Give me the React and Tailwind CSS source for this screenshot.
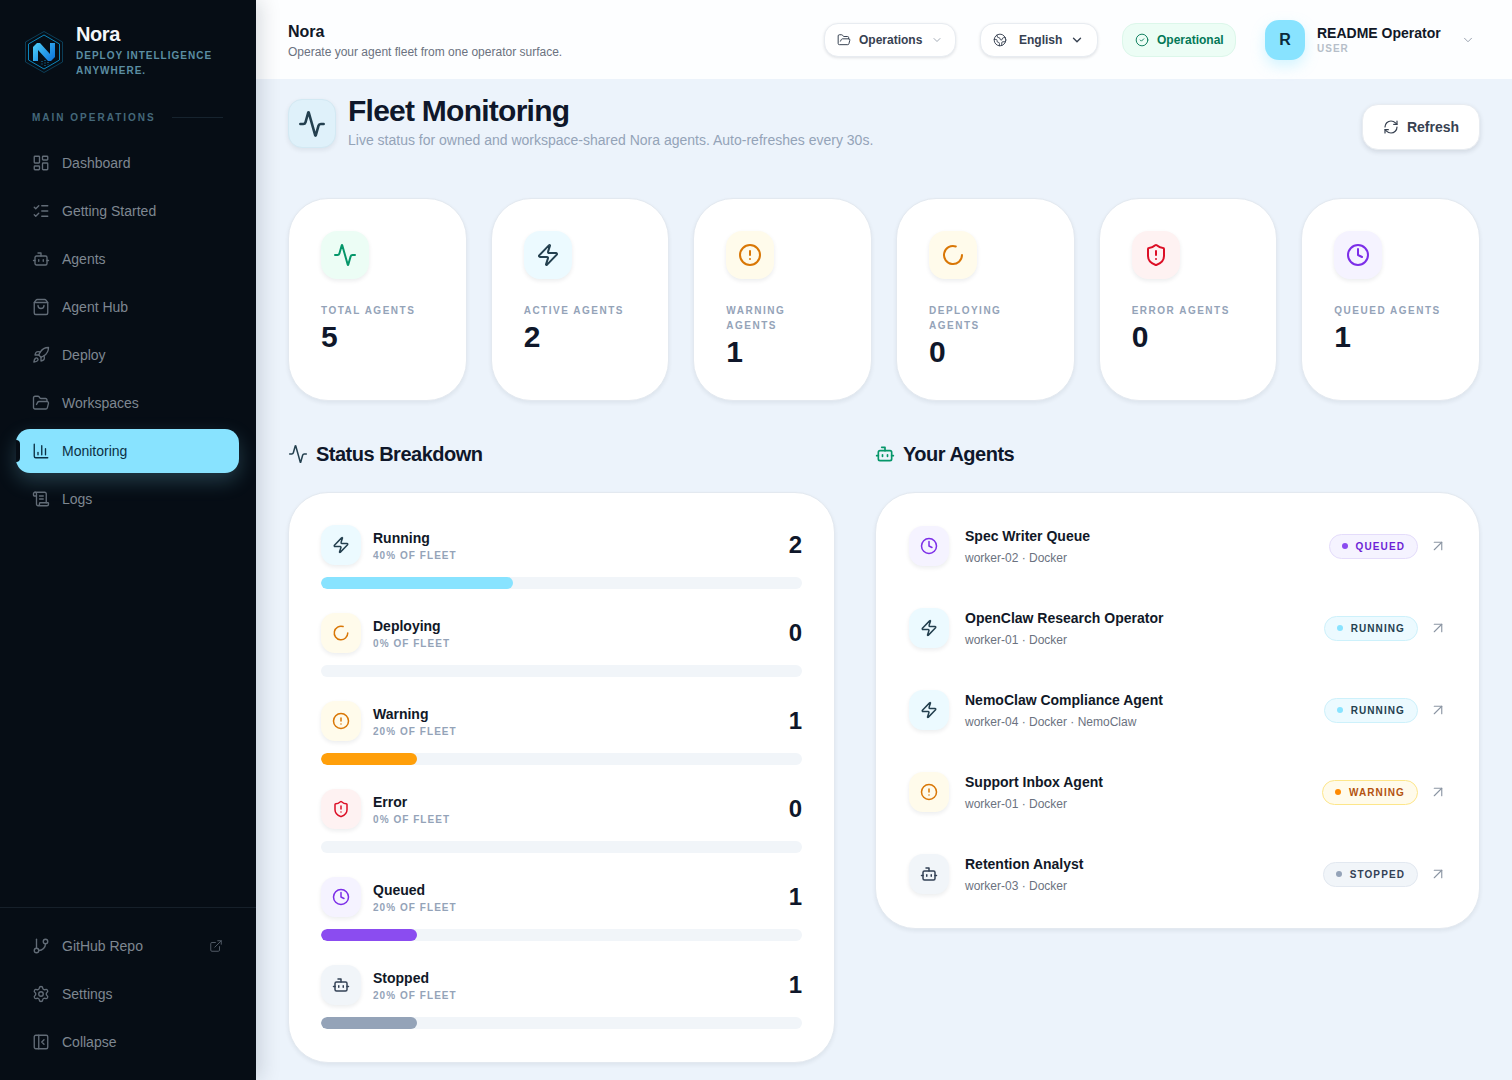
import React from 'react';
import {
  Activity, ArrowUpRight, Bot, ChartColumn, ChevronDown, CircleAlert, CircleCheck, Clock, Earth, ExternalLink,
  FolderOpen, GitBranch, LayoutDashboard, ListChecks, LoaderCircle, PanelLeftClose, RefreshCw, Rocket,
  ScrollText, Settings, ShieldAlert, ShoppingBag, Zap,
} from 'lucide-react';

const navItems = [
  { label: 'Dashboard', icon: LayoutDashboard },
  { label: 'Getting Started', icon: ListChecks },
  { label: 'Agents', icon: Bot },
  { label: 'Agent Hub', icon: ShoppingBag },
  { label: 'Deploy', icon: Rocket },
  { label: 'Workspaces', icon: FolderOpen },
  { label: 'Monitoring', icon: ChartColumn, active: true },
  { label: 'Logs', icon: ScrollText },
];

const tones = {
  green: { box: 'bg-[#ecfdf5]', icon: 'text-[#059669]' },
  cyan: { box: 'bg-[#ecfaff]', icon: 'text-[#24404f]' },
  amber: { box: 'bg-[#fffbeb]', icon: 'text-[#d97706]' },
  red: { box: 'bg-[#fef2f2]', icon: 'text-[#dc0f26]' },
  violet: { box: 'bg-[#f5f3ff]', icon: 'text-[#7c2ee8]' },
  slate: { box: 'bg-[#f1f5f9]', icon: 'text-[#334155]' },
};

const stats = [
  { label: 'Total Agents', value: 5, icon: Activity, tone: 'green' },
  { label: 'Active Agents', value: 2, icon: Zap, tone: 'cyan' },
  { label: 'Warning Agents', value: 1, icon: CircleAlert, tone: 'amber' },
  { label: 'Deploying Agents', value: 0, icon: LoaderCircle, tone: 'amber' },
  { label: 'Error Agents', value: 0, icon: ShieldAlert, tone: 'red' },
  { label: 'Queued Agents', value: 1, icon: Clock, tone: 'violet' },
];

const breakdown = [
  { label: 'Running', pct: 40, count: 2, icon: Zap, tone: 'cyan', bar: 'bg-[#88e3ff]' },
  { label: 'Deploying', pct: 0, count: 0, icon: LoaderCircle, tone: 'amber', bar: 'bg-[#f59e0b]' },
  { label: 'Warning', pct: 20, count: 1, icon: CircleAlert, tone: 'amber', bar: 'bg-[#ff9f0a]' },
  { label: 'Error', pct: 0, count: 0, icon: ShieldAlert, tone: 'red', bar: 'bg-[#dc2626]' },
  { label: 'Queued', pct: 20, count: 1, icon: Clock, tone: 'violet', bar: 'bg-[#8b4cf0]' },
  { label: 'Stopped', pct: 20, count: 1, icon: Bot, tone: 'slate', bar: 'bg-[#94a3b8]' },
];

const pills = {
  queued: { text: 'Queued', box: 'bg-[#f5f3ff] border-[#e4dcfb] text-[#6d1fd6]', dot: 'bg-[#8b4cf0]' },
  running: { text: 'Running', box: 'bg-[#ecfaff] border-[#cdf1fb] text-[#24404f]', dot: 'bg-[#88e3ff]' },
  warning: { text: 'Warning', box: 'bg-[#fffbeb] border-[#fde68a] text-[#b4530f]', dot: 'bg-[#ff8a00]' },
  stopped: { text: 'Stopped', box: 'bg-[#f1f5f9] border-[#e2e8f0] text-[#334155]', dot: 'bg-[#94a3b8]' },
};

const agents = [
  { name: 'Spec Writer Queue', meta: 'worker-02 · Docker', icon: Clock, tone: 'violet', status: 'queued' },
  { name: 'OpenClaw Research Operator', meta: 'worker-01 · Docker', icon: Zap, tone: 'cyan', status: 'running' },
  { name: 'NemoClaw Compliance Agent', meta: 'worker-04 · Docker · NemoClaw', icon: Zap, tone: 'cyan', status: 'running' },
  { name: 'Support Inbox Agent', meta: 'worker-01 · Docker', icon: CircleAlert, tone: 'amber', status: 'warning' },
  { name: 'Retention Analyst', meta: 'worker-03 · Docker', icon: Bot, tone: 'slate', status: 'stopped' },
];

const NoraLogo = () => (
  <svg width="42" height="44" viewBox="0 0 42 44" fill="none" className="shrink-0">
    <defs>
      <linearGradient id="noraN" x1="10" y1="13" x2="32" y2="31" gradientUnits="userSpaceOnUse">
        <stop stopColor="#4fd2fb" />
        <stop offset="1" stopColor="#0a6fd8" />
      </linearGradient>
    </defs>
    <path d="M21 1.500 39.500 12v20L21 42.500 2.500 32V12z" stroke="#0d4a68" strokeWidth="0.800" />
    <path d="M21 5 36.500 14v16L21 39 5.500 30V14z" stroke="#0b86bd" strokeWidth="1" />
    <path d="M10 31V17l4-4h3l10 11V13h5v14l-4 4h-3L15 20v11z" fill="url(#noraN)" />
    <path d="M19 31v5M22 30v7M25 32v3" stroke="#1787b8" strokeWidth="1" strokeDasharray="1 1.500" />
  </svg>
);

const NavRow = ({ item }) => {
  const Icon = item.icon;
  return (
    <a className={'relative flex h-11 items-center rounded-[14px] pl-[16px] text-sm ' + (item.active ? 'bg-[#88e3ff] text-[#0c3044] shadow-[0_8px_20px_rgba(136,227,255,0.22)]' : 'text-[#7e8791]')}>
      {item.active && <span className="absolute left-0 top-[11px] h-[22px] w-1 rounded-r-full bg-[#060d15]" />}
      <Icon size={18} strokeWidth={1.8} className={item.active ? 'text-[#0c3044]' : 'text-[#626c77]'} />
      <span className="ml-[12px]">{item.label}</span>
      {item.external && <ExternalLink size={14} strokeWidth={1.7} className="absolute right-[16px] text-[#525b66]" />}
    </a>
  );
};

const Sidebar = () => (
  <aside className="relative z-20 flex h-full w-64 shrink-0 flex-col bg-[#060d15] shadow-[4px_0_20px_rgba(15,23,42,0.16)]">
    <div className="flex items-start gap-[11px] pl-[23px] pt-[23px]">
      <div className="pt-[7px]"><NoraLogo /></div>
      <div>
        <div className="text-xl font-bold leading-[22px] tracking-[-0.02em] text-[#f4f7fa]">Nora</div>
        <div className="mt-[3px] w-[150px] text-[10px] font-bold uppercase leading-[15px] tracking-[0.1em] text-[#5b8ea3]">Deploy intelligence anywhere.</div>
      </div>
    </div>
    <div className="mt-[32px] flex items-center pl-[32px] pr-[33px]">
      <span className="text-[10px] font-bold uppercase leading-[15px] tracking-[0.2em] text-[#44687a]">Main operations</span>
      <span className="ml-4 h-px flex-1 bg-[#16232e]" />
    </div>
    <nav className="mt-[16px] flex flex-col gap-1 pl-[16px] pr-[17px]">
      {navItems.map((item) => <NavRow key={item.label} item={item} />)}
    </nav>
    <div className="mt-auto flex flex-col gap-1 border-t border-[#16202a] pb-[16px] pl-[16px] pr-[17px] pt-[16px]">
      <NavRow item={{ label: 'GitHub Repo', icon: GitBranch, external: true }} />
      <NavRow item={{ label: 'Settings', icon: Settings }} />
      <NavRow item={{ label: 'Collapse', icon: PanelLeftClose }} />
    </div>
  </aside>
);

const TopBar = () => (
  <header className="flex h-[79px] shrink-0 items-center bg-[#fdfeff] pl-[32px] pr-[32px]">
    <div className="flex-1 pt-[2px]">
      <div className="text-base font-bold leading-[20px] text-[#111827]">Nora</div>
      <div className="mt-[2px] text-xs leading-[16px] text-[#6b7280]">Operate your agent fleet from one operator surface.</div>
    </div>
    <button className="flex h-[34px] w-[132px] items-center rounded-[14px] border border-[#e8ecf1] bg-white pl-[12px] text-xs font-bold text-[#374151] shadow-[0_1px_3px_rgba(15,23,42,0.12)]">
      <FolderOpen size={14} strokeWidth={1.7} />
      <span className="ml-2">Operations</span>
      <ChevronDown size={12} strokeWidth={1.6} className="ml-[9px] text-[#8b95a3]" />
    </button>
    <button className="ml-6 flex h-[34px] w-[118px] items-center rounded-[14px] border border-[#e8ecf1] bg-white pl-[12px] text-xs font-bold text-[#374151] shadow-[0_1px_3px_rgba(15,23,42,0.12)]">
      <Earth size={14} strokeWidth={1.6} />
      <span className="ml-[12px]">English</span>
      <ChevronDown size={14} strokeWidth={2.4} className="ml-[8px]" />
    </button>
    <div className="ml-6 flex h-[34px] w-[114px] items-center rounded-[14px] border border-[#dcf7ea] bg-[#ecfdf5] pl-[12px] text-xs font-bold text-[#047857]">
      <CircleCheck size={14} strokeWidth={1.6} />
      <span className="ml-[8px]">Operational</span>
    </div>
    <div className="ml-[29px] flex h-10 w-10 items-center justify-center rounded-[14px] bg-[#88e3ff] text-base font-bold text-[#0c2a3a] shadow-[0_6px_14px_rgba(136,227,255,0.35)]">R</div>
    <div className="ml-3 w-[144px]">
      <div className="text-sm font-bold leading-[17px] text-[#111827]">README Operator</div>
      <div className="text-[10px] font-bold uppercase leading-[13px] tracking-[0.1em] text-[#b6bec9]">User</div>
    </div>
    <ChevronDown size={14} strokeWidth={1.5} className="mr-[5px] text-[#8b95a3]" />
  </header>
);

const IconBox = ({ icon: Icon, tone, className, size, strokeWidth = 2 }) => (
  <div className={'flex shrink-0 items-center justify-center shadow-[0_2px_4px_rgba(15,23,42,0.08)] ' + tones[tone].box + ' ' + className}>
    <Icon size={size} strokeWidth={strokeWidth} className={tones[tone].icon} />
  </div>
);

const StatCard = ({ stat }) => (
  <div className="rounded-[40px] border border-[#e3e9f0] bg-white pb-[30px] pl-[32px] pr-[32px] pt-[32px] shadow-[0_2px_4px_rgba(15,23,42,0.07)]">
    <IconBox icon={stat.icon} tone={stat.tone} className="h-12 w-12 rounded-[16px]" size={24} />
    <div className="mt-[24px] text-[10px] font-bold uppercase leading-[15px] tracking-[0.15em] text-[#94a3b8]">{stat.label}</div>
    <div className="mt-[1px] text-[30px] font-bold leading-[36px] text-[#0f172a]">{stat.value}</div>
  </div>
);

const BreakdownRow = ({ row }) => (
  <div>
    <div className="flex items-center">
      <IconBox icon={row.icon} tone={row.tone} className="h-10 w-10 rounded-[14px]" size={18} />
      <div className="ml-3 flex-1 pt-[2px]">
        <div className="text-sm font-bold leading-[17px] text-[#111827]">{row.label}</div>
        <div className="mt-[1px] text-[10px] font-bold uppercase leading-[15px] tracking-[0.105em] text-[#94a3b8]">{row.pct}% of fleet</div>
      </div>
      <div className="text-2xl font-bold leading-[32px] text-[#0f172a]">{row.count}</div>
    </div>
    <div className="mt-3 h-3 overflow-hidden rounded-full bg-[#f1f5f9]">
      <div className={'h-full rounded-full ' + row.bar} style={{ width: row.pct + '%' }} />
    </div>
  </div>
);

const AgentRow = ({ agent }) => {
  const pill = pills[agent.status];
  return (
    <div className="flex h-10 items-center">
      <IconBox icon={agent.icon} tone={agent.tone} className="h-10 w-10 rounded-[14px]" size={18} />
      <div className="ml-4 flex-1 pt-[2px]">
        <div className="text-sm font-bold leading-[20px] text-[#111827]">{agent.name}</div>
        <div className="mt-[2px] text-xs leading-[20px] text-[#6b7280]">{agent.meta}</div>
      </div>
      <div className={'flex h-[25px] items-center rounded-full border pl-[12px] pr-[12px] text-[10px] font-bold uppercase tracking-[0.11em] ' + pill.box}>
        <span className={'mr-2 h-[6px] w-[6px] rounded-full ' + pill.dot} />
        {pill.text}
      </div>
      <ArrowUpRight size={18} strokeWidth={1.5} className="ml-[11px] text-[#8b95a3]" />
    </div>
  );
};

export default function App() {
  return (
    <div className="flex h-screen w-full overflow-hidden bg-[#ecf3fb] font-['Liberation_Sans',Arial,sans-serif]">
      <Sidebar />
      <div className="flex min-w-0 flex-1 flex-col">
        <TopBar />
        <main className="flex-1 overflow-hidden pl-[32px] pr-[32px] pt-[20px]">
          <div className="flex items-start justify-between">
            <div className="flex gap-3">
              <div className="flex h-[49px] w-[48px] items-center justify-center rounded-[14px] border border-[#d3e9f3] bg-[#dff1fa] shadow-[0_2px_5px_rgba(15,23,42,0.08)]">
                <Activity size={28} strokeWidth={2.2} className="text-[#24404f]" />
              </div>
              <div>
                <h1 className="-mt-[4px] text-[30px] font-bold leading-[32px] tracking-[-0.025em] text-[#0f172a]">Fleet Monitoring</h1>
                <p className="mt-[3px] text-sm leading-[20px] text-[#94a3b8]">Live status for owned and workspace-shared Nora agents. Auto-refreshes every 30s.</p>
              </div>
            </div>
            <button className="mt-[5px] flex h-[46px] w-[118px] items-center justify-center rounded-[16px] border border-[#e8ecf1] bg-white text-sm font-bold text-[#374151] shadow-[0_2px_5px_rgba(15,23,42,0.12)]">
              <RefreshCw size={16} strokeWidth={1.8} />
              <span className="ml-2">Refresh</span>
            </button>
          </div>

          <div className="mt-[48px] grid grid-cols-6 gap-6">
            {stats.map((stat) => <StatCard key={stat.label} stat={stat} />)}
          </div>

          <div className="mt-[41px] grid grid-cols-[547px_605px] gap-10">
            <section>
              <h2 className="flex items-center gap-2 text-xl font-bold leading-[24px] tracking-[-0.025em] text-[#0f172a]">
                <Activity size={20} strokeWidth={1.8} className="text-[#24404f]" />
                Status Breakdown
              </h2>
              <div className="mt-[26px] flex flex-col gap-6 rounded-[40px] border border-[#e3e9f0] bg-white pb-[33px] pl-[32px] pr-[32px] pt-[32px] shadow-[0_2px_4px_rgba(15,23,42,0.07)]">
                {breakdown.map((row) => <BreakdownRow key={row.label} row={row} />)}
              </div>
            </section>
            <section>
              <h2 className="flex items-center gap-2 text-xl font-bold leading-[24px] tracking-[-0.025em] text-[#0f172a]">
                <Bot size={20} strokeWidth={2} className="text-[#059669]" />
                Your Agents
              </h2>
              <div className="mt-[26px] flex flex-col gap-[42px] rounded-[40px] border border-[#e3e9f0] bg-white pb-[34px] pl-[33px] pr-[32px] pt-[33px] shadow-[0_2px_4px_rgba(15,23,42,0.07)]">
                {agents.map((agent) => <AgentRow key={agent.name} agent={agent} />)}
              </div>
            </section>
          </div>
        </main>
      </div>
    </div>
  );
}
